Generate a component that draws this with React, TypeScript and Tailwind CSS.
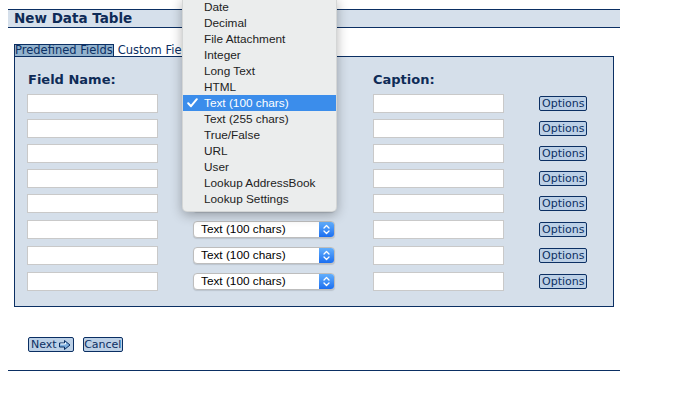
import React from "react";

const menuItems = [
  "Date",
  "Decimal",
  "File Attachment",
  "Integer",
  "Long Text",
  "HTML",
  "Text (100 chars)",
  "Text (255 chars)",
  "True/False",
  "URL",
  "User",
  "Lookup AddressBook",
  "Lookup Settings",
];

const selected = "Text (100 chars)";

function TextInput() {
  return <div className="h-[19px] w-[131px] border border-[#c9c9c9] bg-white" />;
}

function TypeSelect() {
  return (
    <div className="flex h-[17px] w-[142px] items-center overflow-hidden rounded-[4px] border border-[#bdbdbd] bg-white shadow-[0_1px_1px_rgba(0,0,0,0.12)]">
      <span className="flex-1 pl-[7px] font-['Liberation_Sans',sans-serif] text-[11.8px] leading-[15px] text-black">
        Text (100 chars)
      </span>
      <span className="flex h-full w-[15px] items-center justify-center bg-gradient-to-b from-[#62aefc] to-[#1b6ef0]">
        <svg width="7" height="11" viewBox="0 0 7 11" fill="none">
          <path d="M1 4 L3.5 1.5 L6 4" stroke="white" strokeWidth="1.3" strokeLinecap="round" strokeLinejoin="round" />
          <path d="M1 7 L3.5 9.5 L6 7" stroke="white" strokeWidth="1.3" strokeLinecap="round" strokeLinejoin="round" />
        </svg>
      </span>
    </div>
  );
}

function SmallButton({ children, tight }: { children: React.ReactNode; tight?: boolean }) {
  return (
    <button
      className={`flex h-[15px] items-center gap-[2px] rounded-[2px] border border-[#0b2f63] bg-[#bcd0e6] text-[11px] leading-[13px] text-[#0b2f63] ${tight ? "px-[0.5px]" : "px-[2px]"}`}
    >
      {children}
    </button>
  );
}

function NextArrow() {
  return (
    <svg width="12" height="10" viewBox="0 0 12 10">
      <path d="M0.5 3 H5.5 V0.5 L11 5 L5.5 9.5 V7 H0.5 Z" fill="#7fb0e0" stroke="#0b2f63" strokeWidth="1" />
      <path d="M1.5 4 H6.5 V2.5" fill="none" stroke="white" strokeWidth="1" />
    </svg>
  );
}

export default function App() {
  return (
    <div className="relative h-[402px] w-[690px] overflow-hidden bg-white pl-[8px] pt-[9px] font-['DejaVu_Sans',Verdana,sans-serif]">
      <div className="w-[612px]">
        <div className="flex h-[19px] items-center border-y border-[#0b2f63] bg-[#d6e0eb] pl-[6px] text-[13.5px] font-bold text-[#0e2b57]">
          New Data Table
        </div>

        <div className="ml-[6px] mt-[16px] flex h-[12px] items-end">
          <div className="h-[12px] border-x border-t border-[#0b2f63] bg-[#92b2cd] text-[11.5px] leading-[11px] text-[#0b2f63]">
            Predefined Fields
          </div>
          <div className="ml-[4px] text-[11.5px] leading-[11px] text-[#0b2f63]">Custom Fields</div>
        </div>

        <div className="ml-[6px] w-[600px] border border-[#0b2f63] bg-[#d5dfea] pb-[12px] pl-[12px] pt-[13px]">
          <div className="mb-[1px] grid h-[20px] grid-cols-[166px_180px_166px_auto] items-center text-[13px] font-bold text-[#0e2b57]">
            <span className="pl-[1px]">Field Name:</span>
            <span />
            <span>Caption:</span>
            <span />
          </div>
          {Array.from({ length: 8 }).map((_, i) => (
            <div
              key={i}
              className={`grid grid-cols-[166px_180px_166px_auto] items-center ${i < 5 ? "h-[25px]" : "h-[26px]"}`}
            >
              <TextInput />
              <TypeSelect />
              <TextInput />
              <div>
                <SmallButton>Options</SmallButton>
              </div>
            </div>
          ))}
        </div>

        <div className="ml-[20px] mt-[30px] flex gap-[9px]">
          <SmallButton>
            Next
            <NextArrow />
          </SmallButton>
          <SmallButton tight>Cancel</SmallButton>
        </div>

        <div className="mt-[18px] border-t border-[#0b2f63]" />
      </div>

      <div className="absolute left-[182px] top-[-2px] w-[155px] rounded-b-[5px] border border-[#c4c6c6]/60 bg-[#ebeded] pb-[4px] font-['Liberation_Sans',sans-serif] shadow-[0_3px_12px_rgba(0,0,0,0.3)]">
        {menuItems.map((item) => (
          <div
            key={item}
            className={`relative h-[16px] pl-[21px] text-[11.8px] leading-[16px] ${item === selected ? "bg-[#3b8deb] text-white" : "text-[#222222]"}`}
          >
            {item === selected ? (
              <svg className="absolute left-[4px] top-[3px]" width="11" height="10" viewBox="0 0 11 10">
                <path d="M1.2 5.3 L4 8.2 L9.8 1.2" fill="none" stroke="white" strokeWidth="2" strokeLinecap="round" strokeLinejoin="round" />
              </svg>
            ) : null}
            {item}
          </div>
        ))}
      </div>
    </div>
  );
}
